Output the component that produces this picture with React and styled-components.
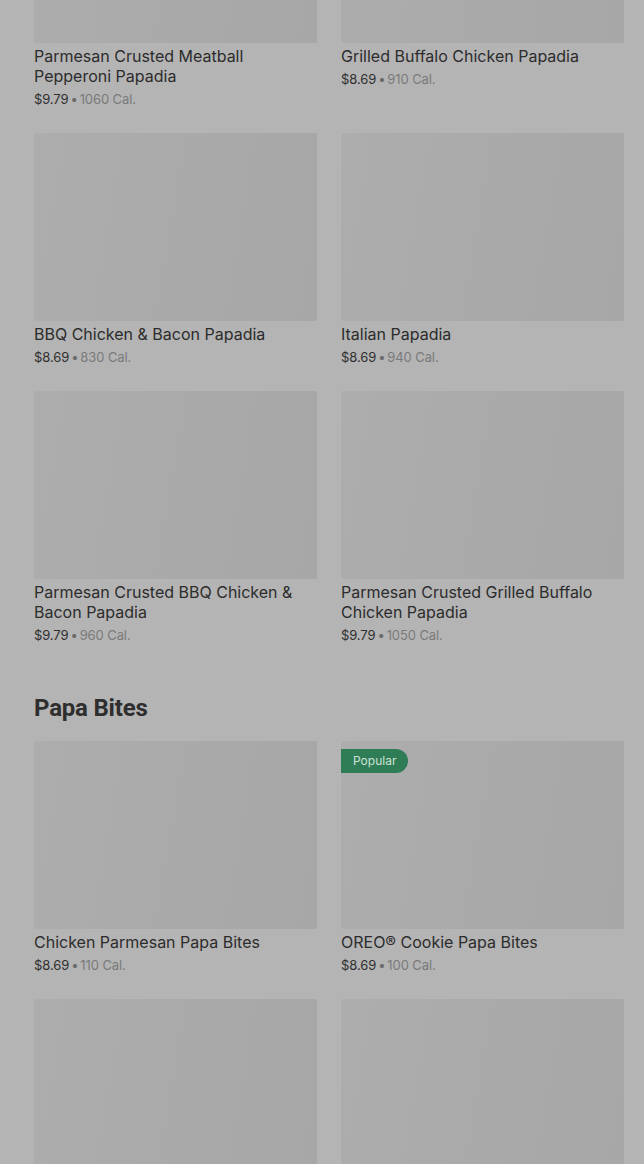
import React from "react";
import styled, { createGlobalStyle } from "styled-components";

const GlobalStyle = createGlobalStyle`
  html, body {
    margin: 0;
    padding: 0;
    background: #b4b4b4;
    overflow: hidden;
  }
  body {
    font-family: Inter, Roboto, "Liberation Sans", sans-serif;
    -webkit-font-smoothing: antialiased;
  }
`;

const Page = styled.main`
  margin-top: -145px;
  padding: 0 20px 0 34px;
`;

const Section = styled.section`
  & + & {
    margin-top: 47px;
  }
`;

const SectionTitle = styled.h2`
  margin: 0 0 17px;
  font-family: Roboto, "Liberation Sans", sans-serif;
  font-size: 24px;
  line-height: 32px;
  font-weight: 700;
  letter-spacing: -0.2px;
  color: #2e2e2e;
`;

const Grid = styled.div`
  display: grid;
  grid-template-columns: 283px 283px;
  column-gap: 24px;
  row-gap: 24px;
`;

const Card = styled.article`
  position: relative;
  display: flex;
  flex-direction: column;
`;

const ImageBox = styled.div`
  height: 188px;
  border-radius: 2px;
  background: linear-gradient(100deg, #adadad 0%, #aaaaaa 45%, #a7a7a7 100%);
`;

const Badge = styled.span`
  position: absolute;
  top: 8px;
  left: 0;
  height: 24px;
  padding: 0 12px;
  border-radius: 0 12px 12px 0;
  background: #2f7d57;
  color: #cde2d5;
  font-family: Inter, Roboto, sans-serif;
  font-size: 12px;
  line-height: 24px;
`;

const Title = styled.h3`
  margin: 3px 0 0;
  font-family: Inter, Roboto, sans-serif;
  font-size: 16px;
  line-height: 20px;
  font-weight: 400;
  color: #2c2c2c;
`;

const Meta = styled.p`
  margin: 3px 0 0;
  font-family: Inter, Roboto, sans-serif;
  font-size: 13px;
  line-height: 20px;
  letter-spacing: -0.1px;
  color: #7a7a7a;
`;

const Price = styled.span`
  color: #2f2f2f;
`;

const Dot = styled.span`
  margin: 0 2px;
  color: #6a6a6a;
`;

const papadias = [
  { name: "Parmesan Crusted Meatball Pepperoni Papadia", price: "$9.79", cal: "1060 Cal." },
  { name: "Grilled Buffalo Chicken Papadia", price: "$8.69", cal: "910 Cal." },
  { name: "BBQ Chicken & Bacon Papadia", price: "$8.69", cal: "830 Cal." },
  { name: "Italian Papadia", price: "$8.69", cal: "940 Cal." },
  { name: "Parmesan Crusted BBQ Chicken & Bacon Papadia", price: "$9.79", cal: "960 Cal." },
  { name: "Parmesan Crusted Grilled Buffalo Chicken Papadia", price: "$9.79", cal: "1050 Cal." },
];

const bites = [
  { name: "Chicken Parmesan Papa Bites", price: "$8.69", cal: "110 Cal." },
  { name: "OREO® Cookie Papa Bites", price: "$8.69", cal: "100 Cal.", popular: true },
  { name: "Cinnamon Pull Aparts", price: "$8.69", cal: "120 Cal." },
  { name: "Garlic Knots", price: "$6.99", cal: "90 Cal." },
];

function MenuCard({ item }) {
  return (
    <Card>
      <ImageBox />
      {item.popular && <Badge>Popular</Badge>}
      <Title>{item.name}</Title>
      <Meta>
        <Price>{item.price}</Price>
        <Dot>•</Dot>
        {item.cal}
      </Meta>
    </Card>
  );
}

export default function App() {
  return (
    <>
      <GlobalStyle />
      <Page>
        <Section>
          <Grid>
            {papadias.map((it) => (
              <MenuCard key={it.name} item={it} />
            ))}
          </Grid>
        </Section>
        <Section>
          <SectionTitle>Papa Bites</SectionTitle>
          <Grid>
            {bites.map((it) => (
              <MenuCard key={it.name} item={it} />
            ))}
          </Grid>
        </Section>
      </Page>
    </>
  );
}
